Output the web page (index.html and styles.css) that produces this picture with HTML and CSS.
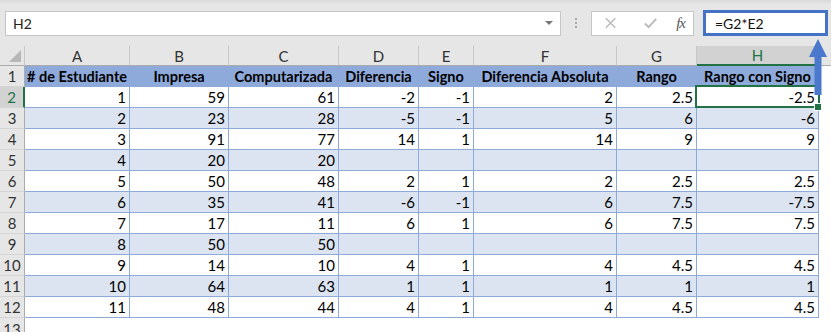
FILE: index.html
```html
<!DOCTYPE html>
<html>
<head>
<meta charset="utf-8">
<link rel="stylesheet" href="styles.css">
</head>
<body>
<div class="app">
  <div class="toolbar">
    <div class="namebox"><span>H2</span><span class="caret"></span></div>
    <div class="dots"><i></i><i></i><i></i></div>
    <div class="fxbox">
      <svg class="ic" width="14" height="14" viewBox="0 0 14 14"><path d="M2 2 L12 12 M12 2 L2 12" stroke="#b9b9b9" stroke-width="1.5" fill="none"/></svg>
      <svg class="ic" width="16" height="14" viewBox="0 0 16 14"><path d="M2 7.5 L6 11.5 L14 2.5" stroke="#b9b9b9" stroke-width="2" fill="none"/></svg>
      <span class="fx">fx</span>
    </div>
    <div class="formula">=G2*E2</div>
  </div>
  <div class="sheet">
    <div class="corner"><span class="tri"></span></div>
    <div class="ch">A</div><div class="ch">B</div><div class="ch">C</div><div class="ch">D</div><div class="ch">E</div><div class="ch">F</div><div class="ch">G</div><div class="ch ch-sel">H</div><div class="ch ch-rest"></div>

    <div class="rh">1</div>
    <div class="c hd">#&nbsp;de Estudiante</div><div class="c hd">Impresa</div><div class="c hd">Computarizada</div><div class="c hd">Diferencia</div><div class="c hd">Signo</div><div class="c hd">Diferencia Absoluta</div><div class="c hd">Rango</div><div class="c hd">Rango con Signo</div><div class="x"></div>

    <div class="rh rh-sel">2</div>
    <div class="c">1</div><div class="c">59</div><div class="c">61</div><div class="c">-2</div><div class="c">-1</div><div class="c">2</div><div class="c">2.5</div><div class="c sel">-2.5</div><div class="x"></div>

    <div class="rh">3</div>
    <div class="c b">2</div><div class="c b">23</div><div class="c b">28</div><div class="c b">-5</div><div class="c b">-1</div><div class="c b">5</div><div class="c b">6</div><div class="c b">-6</div><div class="x"></div>

    <div class="rh">4</div>
    <div class="c">3</div><div class="c">91</div><div class="c">77</div><div class="c">14</div><div class="c">1</div><div class="c">14</div><div class="c">9</div><div class="c">9</div><div class="x"></div>

    <div class="rh">5</div>
    <div class="c b">4</div><div class="c b">20</div><div class="c b">20</div><div class="c b"></div><div class="c b"></div><div class="c b"></div><div class="c b"></div><div class="c b"></div><div class="x"></div>

    <div class="rh">6</div>
    <div class="c">5</div><div class="c">50</div><div class="c">48</div><div class="c">2</div><div class="c">1</div><div class="c">2</div><div class="c">2.5</div><div class="c">2.5</div><div class="x"></div>

    <div class="rh">7</div>
    <div class="c b">6</div><div class="c b">35</div><div class="c b">41</div><div class="c b">-6</div><div class="c b">-1</div><div class="c b">6</div><div class="c b">7.5</div><div class="c b">-7.5</div><div class="x"></div>

    <div class="rh">8</div>
    <div class="c">7</div><div class="c">17</div><div class="c">11</div><div class="c">6</div><div class="c">1</div><div class="c">6</div><div class="c">7.5</div><div class="c">7.5</div><div class="x"></div>

    <div class="rh">9</div>
    <div class="c b">8</div><div class="c b">50</div><div class="c b">50</div><div class="c b"></div><div class="c b"></div><div class="c b"></div><div class="c b"></div><div class="c b"></div><div class="x"></div>

    <div class="rh">10</div>
    <div class="c">9</div><div class="c">14</div><div class="c">10</div><div class="c">4</div><div class="c">1</div><div class="c">4</div><div class="c">4.5</div><div class="c">4.5</div><div class="x"></div>

    <div class="rh">11</div>
    <div class="c b">10</div><div class="c b">64</div><div class="c b">63</div><div class="c b">1</div><div class="c b">1</div><div class="c b">1</div><div class="c b">1</div><div class="c b">1</div><div class="x"></div>

    <div class="rh">12</div>
    <div class="c">11</div><div class="c">48</div><div class="c">44</div><div class="c">4</div><div class="c">1</div><div class="c">4</div><div class="c">4.5</div><div class="c">4.5</div><div class="x"></div>

    <div class="rh rh-last">13</div>
    <div class="x"></div><div class="x"></div><div class="x"></div><div class="x"></div><div class="x"></div><div class="x"></div><div class="x"></div><div class="x"></div><div class="x"></div>
  </div>
  <svg class="arrow" width="20" height="58" viewBox="0 0 20 58">
    <path d="M10 0 L19 18 L13.5 18 L13.5 56 L6.5 56 L6.5 18 L1 18 Z" fill="#4a78cc"/>
  </svg>
</div>
</body>
</html>
```

FILE: styles.css
```css
* { box-sizing: border-box; }
html, body { margin: 0; padding: 0; }
body {
  width: 831px;
  height: 332px;
  overflow: hidden;
  background: #fff;
  font-family: Lato, "Liberation Sans", sans-serif;
  color: #000;
}
.app { position: relative; width: 831px; height: 332px; }

.toolbar {
  height: 46px;
  background: linear-gradient(#d8d8d8 0px, #e6e6e6 4px, #e6e6e6 100%);
  display: flex;
  align-items: center;
  padding: 0 2px 0 5px;
}
.namebox {
  width: 556px;
  height: 25px;
  background: #fff;
  border: 1px solid #c6c6c6;
  display: flex;
  align-items: center;
  justify-content: space-between;
  padding: 0 7px 0 7px;
  font-size: 14px;
  color: #222;
}
.caret {
  width: 0; height: 0;
  border-left: 4px solid transparent;
  border-right: 4px solid transparent;
  border-top: 4px solid #777;
}
.dots {
  width: 30px;
  display: flex;
  flex-direction: column;
  align-items: center;
  gap: 2px;
}
.dots i { display: block; width: 2px; height: 2px; background: #a8a8a8; }
.fxbox {
  width: 103px;
  height: 25px;
  background: #fff;
  border: 1px solid #c6c6c6;
  display: flex;
  align-items: center;
  padding: 0 8px 0 12px;
}
.fxbox .ic:first-child { margin-right: 26px; }
.fxbox .ic:nth-child(2) { margin-right: 18px; }
.fx {
  font-family: "Liberation Serif", serif;
  font-style: italic;
  font-size: 15px;
  color: #555;
  letter-spacing: -1px;
}
.formula {
  margin-left: 9px;
  width: 125px;
  height: 26px;
  border: 3px solid #4472c4;
  background: #fff;
  display: flex;
  align-items: center;
  padding-left: 9px;
  font-size: 14px;
  color: #111;
}

.sheet {
  display: grid;
  grid-template-columns: 25px 105px 99px 110px 80px 55px 143px 80px 122px 1fr;
  grid-template-rows: 20px repeat(13, 21px);
  font-size: 15px;
}
.corner {
  background: #e6e6e6;
  border-right: 1px solid #c8c8c8;
  border-bottom: 1px solid #ababab;
  position: relative;
}
.tri {
  position: absolute;
  right: 3px; bottom: 3px;
  width: 0; height: 0;
  border-left: 12px solid transparent;
  border-bottom: 12px solid #b7b7b7;
}
.ch {
  background: #e6e6e6;
  border-right: 1px solid #c8c8c8;
  border-bottom: 1px solid #ababab;
  display: flex;
  align-items: center;
  justify-content: center;
  color: #333;
  font-size: 15px;
}
.ch-sel {
  background: #d2d2d2;
  color: #217346;
  border-bottom: 2px solid #217346;
}
.ch-rest { border-right: none; }
.rh {
  background: #e6e6e6;
  border-right: 1px solid #ababab;
  border-bottom: 1px solid #d4d4d4;
  display: flex;
  align-items: center;
  justify-content: center;
  color: #333;
  font-size: 15px;
}
.rh-last { align-items: flex-start; padding-top: 2px; }
.rh-sel {
  background: #d2d2d2;
  color: #217346;
  border-right: 2px solid #217346;
}
.c {
  border-right: 1px solid #8eaadb;
  border-bottom: 1px solid #8eaadb;
  display: flex;
  align-items: center;
  justify-content: flex-end;
  padding-right: 3px;
  white-space: nowrap;
  position: relative;
}
.c.b { background: #dce4f1; }
.c.hd {
  background: #8eaadb;
  justify-content: center;
  padding: 0;
  font-weight: bold;
  font-size: 14.5px;
  overflow: hidden;
}
.sel::after {
  content: "";
  position: absolute;
  left: -2px; top: -2px; right: -2px; bottom: -1px;
  border: 2px solid #217346;
}
.sel::before {
  content: "";
  position: absolute;
  right: -4px; bottom: -4px;
  width: 6px; height: 6px;
  background: #217346;
  border: 1px solid #fff;
  z-index: 2;
}
.x { background: #fff; }

.arrow {
  position: absolute;
  left: 808px;
  top: 39px;
  z-index: 5;
}
```
